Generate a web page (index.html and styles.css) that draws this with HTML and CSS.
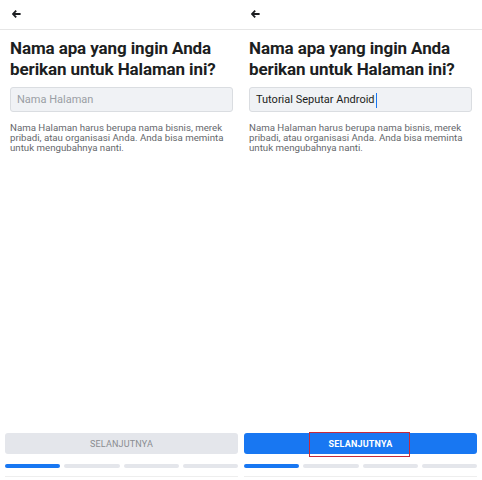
FILE: index.html
```html
<!DOCTYPE html>
<html>
<head>
  <meta charset="utf-8">
  <meta name="viewport" content="width=device-width, initial-scale=1">
  <title>Buat Halaman</title>
  <link rel="stylesheet" href="styles.css">
</head>
<body>
  <div class="screens">
    <!-- Langkah kosong -->
    <section class="screen">
      <header class="topbar">
        <svg class="back" width="9" height="8" viewBox="0 0 9 8"><path d="M4.2 0.6 L1 4 L4.2 7.4 M1.2 4 H8.6" fill="none" stroke="#1c1e21" stroke-width="1.8"/></svg>
      </header>
      <div class="content">
        <h1>Nama apa yang ingin Anda berikan untuk Halaman ini?</h1>
        <div class="field empty">Nama Halaman</div>
        <p class="hint">Nama Halaman harus berupa nama bisnis, merek pribadi, atau organisasi Anda. Anda bisa meminta untuk mengubahnya nanti.</p>
      </div>
      <footer class="actions">
        <button class="next" disabled>SELANJUTNYA</button>
        <div class="progress"><span class="on"></span><span></span><span></span><span></span></div>
      </footer>
    </section>

    <!-- Langkah terisi -->
    <section class="screen">
      <header class="topbar">
        <svg class="back" width="9" height="8" viewBox="0 0 9 8"><path d="M4.2 0.6 L1 4 L4.2 7.4 M1.2 4 H8.6" fill="none" stroke="#1c1e21" stroke-width="1.8"/></svg>
      </header>
      <div class="content">
        <h1>Nama apa yang ingin Anda berikan untuk Halaman ini?</h1>
        <div class="field">Tutorial Seputar Android<span class="caret"></span></div>
        <p class="hint">Nama Halaman harus berupa nama bisnis, merek pribadi, atau organisasi Anda. Anda bisa meminta untuk mengubahnya nanti.</p>
      </div>
      <footer class="actions">
        <button class="next active">SELANJUTNYA</button>
        <div class="mark"></div>
        <div class="progress"><span class="on"></span><span></span><span></span><span></span></div>
      </footer>
    </section>
  </div>
</body>
</html>
```

FILE: styles.css
```css
* {
  box-sizing: border-box;
}

body {
  margin: 0;
  font-family: Roboto, "Noto Sans", sans-serif;
  color: #1c1e21;
  background: #fff;
}

.screens {
  display: grid;
  grid-template-columns: 239px 243px;
  height: 480px;
}

.screen {
  display: flex;
  flex-direction: column;
  height: 480px;
}

.topbar {
  height: 30px;
  border-bottom: 1px solid #e6e6e6;
  padding: 10px 0 0 12px;
}

.back {
  display: block;
}

.content {
  flex: 1;
  padding: 8px 6px 0 10px;
}

h1 {
  font-size: 17px;
  line-height: 21px;
  font-weight: 700;
  margin: 0 0 7px;
  letter-spacing: -0.1px;
}

.field {
  width: 223px;
  height: 25px;
  border: 1px solid #dadde1;
  border-radius: 3px;
  background: #f0f2f5;
  padding: 0 6px;
  font-size: 11px;
  line-height: 23px;
  color: #1c1e21;
}

.field.empty {
  color: #9a9ea4;
}

.caret {
  display: inline-block;
  width: 1px;
  height: 15px;
  background: #1877f2;
  vertical-align: middle;
  margin-left: 1px;
}

.hint {
  margin: 11px 0 0;
  font-size: 9.7px;
  line-height: 9.8px;
  color: #65676b;
}

.actions {
  position: relative;
  padding: 0 1px 3px 5px;
}

.next {
  display: block;
  width: 233px;
  height: 21px;
  border: none;
  border-radius: 3px;
  font-family: Roboto, sans-serif;
  font-size: 9px;
  letter-spacing: 0.2px;
  background: #e4e6eb;
  color: #8a8d91;
  padding: 0;
}

.next.active {
  background: #1877f2;
  color: #fff;
  font-weight: 700;
}

.progress {
  display: flex;
  gap: 4px;
  width: 233px;
  margin-top: 10px;
  padding-bottom: 8px;
  border-bottom: 1px solid #eeeeee;
}

.progress span {
  flex: 1;
  height: 4px;
  border-radius: 2px;
  background: #e4e6eb;
}

.progress span.on {
  background: #1877f2;
}

.mark {
  position: absolute;
  left: 70px;
  top: -1px;
  width: 101px;
  height: 25px;
  border: 1.5px solid #c62a3a;
}
```
